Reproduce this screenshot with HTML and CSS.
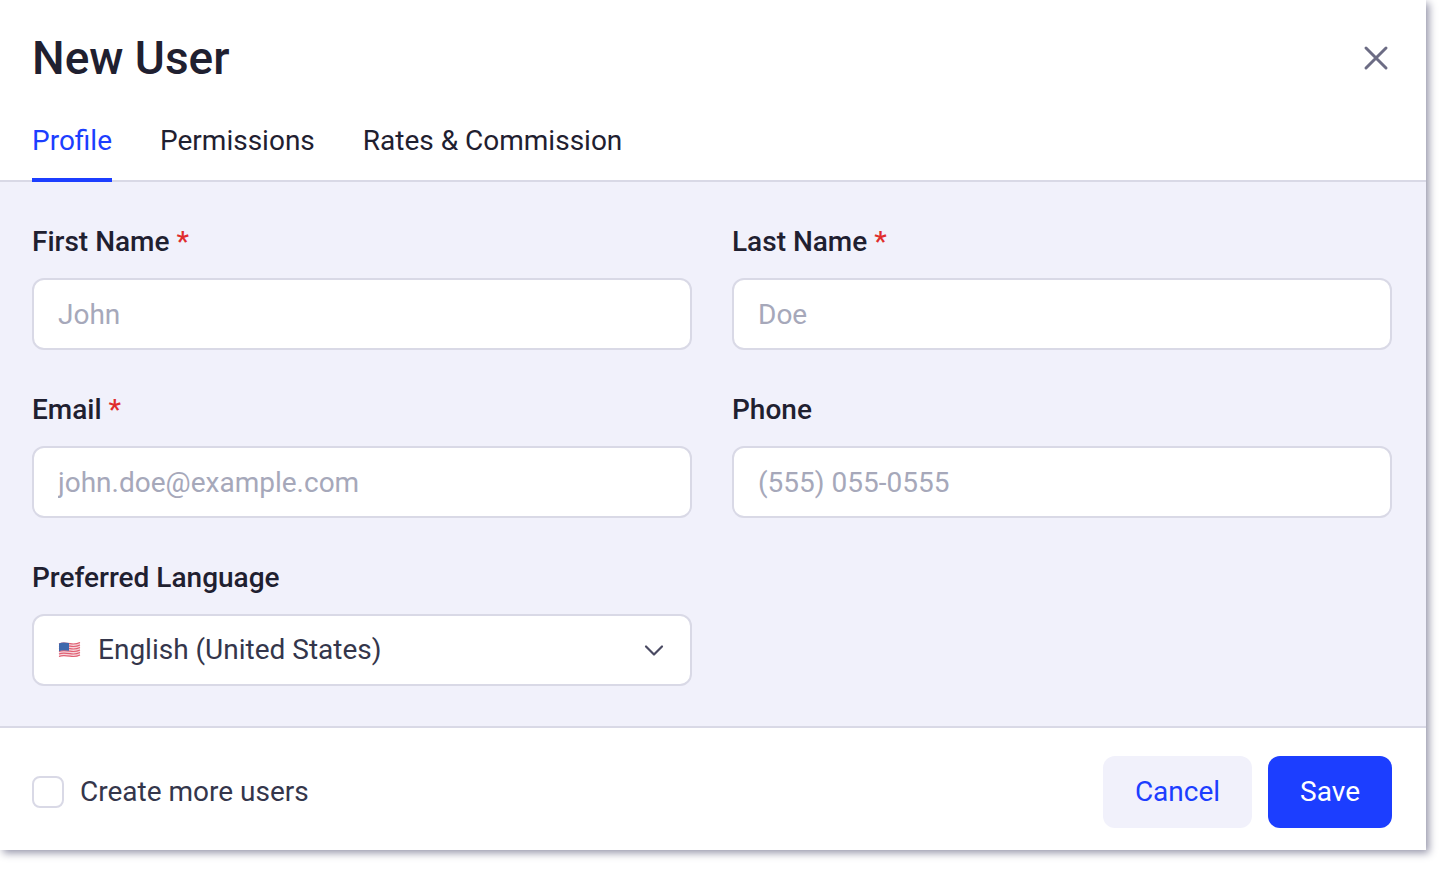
FILE: index.html
```html
<!DOCTYPE html>
<html lang="en">
<head>
<meta charset="utf-8">
<meta name="viewport" content="width=device-width, initial-scale=1">
<title>New User</title>
<link rel="stylesheet" href="styles.css">
</head>
<body>
<form class="dialog" role="dialog" aria-labelledby="dialog-title">
  <header class="dialog-header">
    <div class="title-row">
      <h1 class="title" id="dialog-title">New User</h1>
      <button class="close" type="button" aria-label="Close">
        <svg viewBox="0 0 32 32" width="32" height="32" fill="none" stroke="currentColor" stroke-width="3" stroke-linecap="round"><path d="M6 6 26 26M26 6 6 26"/></svg>
      </button>
    </div>
    <nav class="tabs">
      <a class="tab tab-active" href="#profile" aria-current="page">Profile</a>
      <a class="tab" href="#permissions">Permissions</a>
      <a class="tab" href="#rates">Rates &amp; Commission</a>
    </nav>
  </header>
  <main class="fields" id="profile">
    <div class="field">
      <label class="label" for="first">First Name <span class="required">*</span></label>
      <input class="control" id="first" type="text" placeholder="John">
    </div>
    <div class="field">
      <label class="label" for="last">Last Name <span class="required">*</span></label>
      <input class="control" id="last" type="text" placeholder="Doe">
    </div>
    <div class="field">
      <label class="label" for="email">Email <span class="required">*</span></label>
      <input class="control" id="email" type="email" placeholder="john.doe@example.com">
    </div>
    <div class="field">
      <label class="label" for="phone">Phone</label>
      <input class="control" id="phone" type="tel" placeholder="(555) 055-0555">
    </div>
    <div class="field">
      <label class="label" for="language">Preferred Language</label>
      <div class="select-box">
        <select class="control select" id="language"><option>English (United States)</option></select>
        <svg class="flag" viewBox="0 0 24 18" width="24" height="18" aria-hidden="true">
          <path fill="#f6d5dc" d="M1 2.500C4 1 8 1.500 12 2.200S19 2.500 22 1V14.500C19 16 15 15.700 12 15.200S4 14.500 1 16Z"/>
          <path fill="none" stroke="#e06073" stroke-width="1.200" d="M1 3C4 1.500 8 2 12 2.700S19 3 22 1.500M1 5.500C4 4 8 4.500 12 5.200S19 5.500 22 4M1 8C4 6.500 8 7 12 7.700S19 8 22 6.500M1 10.500C4 9 8 9.500 12 10.200S19 10.500 22 9M1 13C4 11.500 8 12 12 12.700S19 13 22 11.500M1 15.500C4 14 8 14.500 12 15.200S19 15.500 22 14"/>
          <path fill="#3f68ac" d="M1 2.500C4 1 7 1.400 11 2V9.800C7 9.200 4 9 1 10.300Z"/>
        </svg>
        <svg class="chevron" viewBox="0 0 24 24" width="24" height="24" fill="none" stroke="currentColor" stroke-width="2.200" stroke-linecap="round" stroke-linejoin="round" aria-hidden="true"><path d="m4 8.500 8 8 8-8"/></svg>
      </div>
    </div>
  </main>
  <footer class="dialog-footer">
    <label class="more"><input class="checkbox" type="checkbox">Create more users</label>
    <div class="actions">
      <button class="button button-secondary" type="button">Cancel</button>
      <button class="button button-primary" type="submit">Save</button>
    </div>
  </footer>
</form>
</body>
</html>
```
FILE: styles.css
```css
* { box-sizing: border-box; }
body {
  margin: 0;
  background: #fff;
  color: #1f2030;
  font: 400 28px/40px Roboto, sans-serif;
}
.dialog {
  margin: 0 20px 20px 0;
  background: #fff;
  box-shadow: 3px 3px 8px #9696aa;
}
.dialog-header {
  padding: 28px 32px 0;
  border-bottom: 2px solid #d9d9e6;
}
.title-row {
  display: flex;
  align-items: center;
  justify-content: space-between;
}
.title { margin: 0; font-size: 46px; line-height: 60px; font-weight: 500; }
.close {
  display: flex;
  margin-right: 2px;
  padding: 0;
  border: 0;
  background: none;
  color: #6c6c84;
}
.tabs { display: flex; gap: 48px; margin-top: 33px; margin-bottom: -2px; }
.tab {
  padding-bottom: 17px;
  border-bottom: 4px solid transparent;
  color: inherit;
  text-decoration: none;
}
.tab-active { color: #1c3eff; border-color: #1c3eff; }
.fields {
  display: grid;
  grid-template-columns: 1fr 1fr;
  gap: 40px;
  padding: 40px 34px 40px 32px;
  background: #f1f1fb;
}
.field { display: flex; flex-direction: column; gap: 16px; min-width: 0; }
.label { font-weight: 500; }
.required { color: #e02d2d; }
.control {
  width: 100%;
  height: 72px;
  padding: 0 24px;
  border: 2px solid #d9d9e6;
  border-radius: 12px;
  background: #fff;
  color: #34364b;
  font: inherit;
}
.control::placeholder { color: #a6a8ba; opacity: 1; }
.select-box { position: relative; }
.select { display: block; padding: 0 64px; appearance: none; }
.flag { position: absolute; left: 26px; top: 27px; pointer-events: none; }
.chevron { position: absolute; right: 26px; top: 24px; color: #4a4a62; pointer-events: none; }
.dialog-footer {
  display: flex;
  align-items: center;
  justify-content: space-between;
  padding: 28px 34px 22px 32px;
  border-top: 2px solid #d9d9e6;
}
.more { display: flex; align-items: center; gap: 16px; color: #34364b; }
.checkbox {
  width: 32px;
  height: 32px;
  margin: 0;
  border: 2px solid #d9d9e6;
  border-radius: 8px;
  background: #fff;
  appearance: none;
}
.checkbox:checked { background: #1c3eff; }
.actions { display: flex; gap: 16px; }
.button {
  height: 72px;
  padding: 0 32px;
  border: 0;
  border-radius: 12px;
  font: inherit;
}
.button-secondary { background: #f1f1fb; color: #1c3eff; }
.button-primary { background: #1c3eff; color: #fff; }
```
